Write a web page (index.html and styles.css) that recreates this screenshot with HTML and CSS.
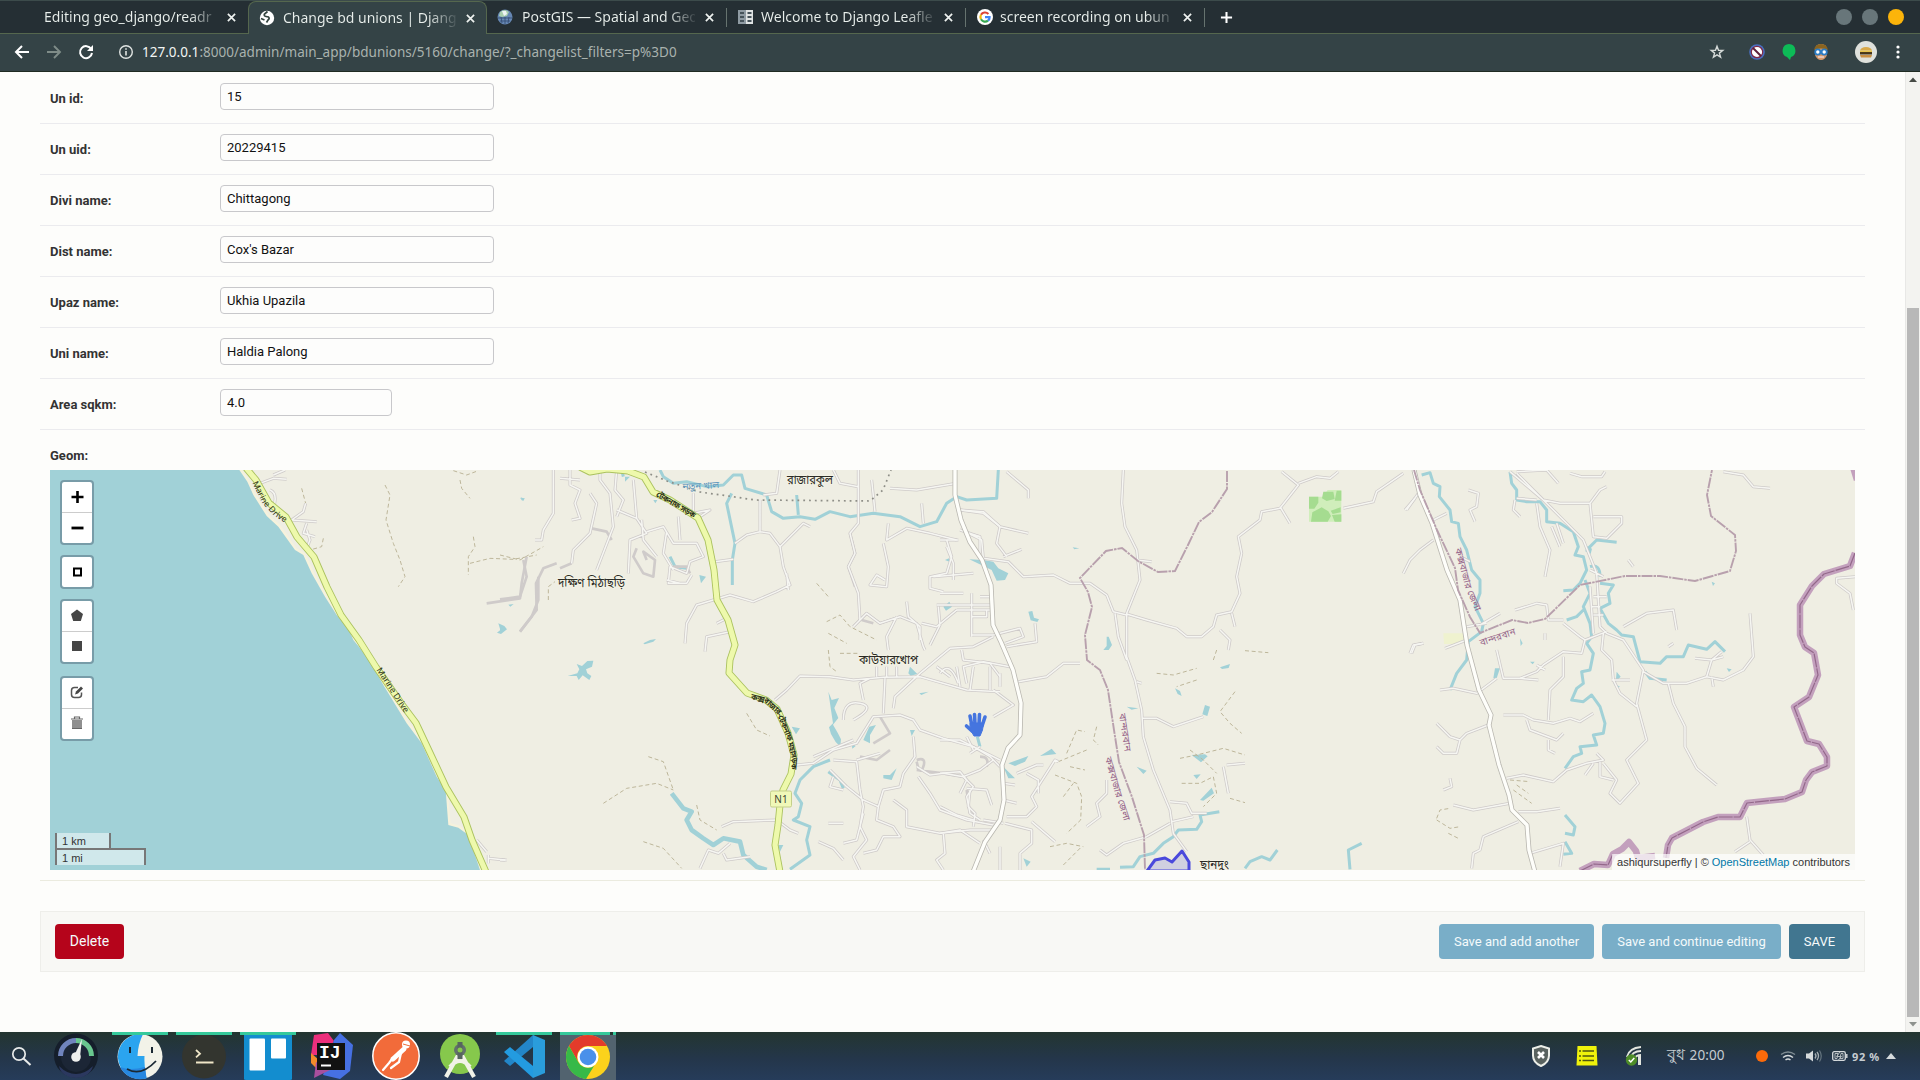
FILE: index.html
```html
<!DOCTYPE html>
<html lang="en">
<head>
<meta charset="utf-8">
<title>Change bd unions | Django site admin</title>
<link rel="stylesheet" href="styles.css">
</head>
<body>
<div class="desktop">
  <header class="tabstrip">
    <div class="tab first"><span class="tab-title">Editing geo_django/readr</span><svg class="close" viewBox="0 0 10 10"><path d="M1 1L9 9M9 1L1 9"/></svg></div>
    <div class="tab active">
      <svg class="favicon" viewBox="0 0 16 16"><circle cx="8" cy="8" r="7.200" fill="#fff"/><path d="M8.500 1.500L5.500 4q-1 2 1.500 2.500l2.500.5q1.500 1.500-.5 3l-1.500 2.500M2 8.500l3.500 1.500" fill="none" stroke="#33443f" stroke-width="1.700"/></svg>
      <span class="tab-title">Change bd unions | Djang</span><svg class="close" viewBox="0 0 10 10"><path d="M1 1L9 9M9 1L1 9"/></svg></div>
    <div class="tab third">
      <svg class="favicon" viewBox="0 0 16 16"><circle cx="8" cy="8" r="7.500" fill="#6687b4"/><path d="M3 3q5-4 9 0l-2 4-5 1-3-1z" fill="#a9cfae"/><path d="M5 2l4 0 1 3-3 2z" fill="#eef4f4"/><path d="M1 9h14M3 12h10M8 8v7M4 8l1 6M12 8l-1 6" stroke="#31496f" stroke-width=".8"/></svg>
      <span class="tab-title">PostGIS — Spatial and Geo</span><svg class="close" viewBox="0 0 10 10"><path d="M1 1L9 9M9 1L1 9"/></svg></div>
    <div class="tab sep">
      <svg class="favicon" viewBox="0 0 16 16"><path fill="#8f9ba3" d="M0 1h8v14H0z"/><path fill="#dfe3e3" d="M8 1h7v14H8z"/><path d="M2 3h4v2H2zM2 7h4v2H2zM2 11h4v2H2zM9.500 3h4v2h-4zM9.500 7h4v2h-4zM9.500 11h4v2h-4z" fill="#46535a"/></svg>
      <span class="tab-title">Welcome to Django Leafle</span><svg class="close" viewBox="0 0 10 10"><path d="M1 1L9 9M9 1L1 9"/></svg></div>
    <div class="tab sep">
      <svg class="favicon" viewBox="0 0 16 16"><circle cx="8" cy="8" r="8" fill="#fff"/><g fill="none" stroke-width="2.200"><path d="M11.400 4.900A4.700 4.700 0 0 0 4 5.800" stroke="#dd4436"/><path d="M4 5.800a4.700 4.700 0 0 0 0 4.500" stroke="#f3b90c"/><path d="M4 10.300a4.700 4.700 0 0 0 7 1.300" stroke="#36a852"/><path d="M11 11.600q1.700-1.500 1.600-3.400H8" stroke="#4285f4"/></g></svg>
      <span class="tab-title">screen recording on ubun</span><svg class="close" viewBox="0 0 10 10"><path d="M1 1L9 9M9 1L1 9"/></svg></div>
    <div class="newtab"><svg viewBox="0 0 14 14"><path d="M7 1v12M1 7h12"/></svg></div>
    <div class="window-buttons"><i></i><i></i><i class="closewin"></i></div>
  </header>
  <nav class="toolbar">
    <div class="nav-icons">
      <svg width="16" height="16" viewBox="0 0 16 16"><path d="M15 8H2M8 2L2 8l6 6" fill="none" stroke="#fff" stroke-width="2"/></svg>
      <svg width="16" height="16" viewBox="0 0 16 16"><path d="M1 8h13M8 2l6 6-6 6" fill="none" stroke="#7f8c88" stroke-width="1.900"/></svg>
      <svg width="16" height="16" viewBox="0 0 16 16"><path d="M13.200 5A6 6 0 1 0 14 9" fill="none" stroke="#fff" stroke-width="2"/><path d="M15 1v6H9z" fill="#fff"/></svg>
    </div>
    <svg class="info" viewBox="0 0 16 16"><circle cx="8" cy="8" r="6.300" fill="none" stroke="#e0e4e2" stroke-width="1.400"/><path d="M8 7v4.500M8 4.300v1.500" stroke="#e0e4e2" stroke-width="1.600"/></svg>
    <div class="url"><b>127.0.0.1</b>:8000/admin/main_app/bdunions/5160/change/?_changelist_filters=p%3D0</div>
    <div class="tools">
      <svg class="star" width="16" height="16" viewBox="0 0 16 16"><path d="M8 2.200l1.500 4 4.300.2-3.400 2.700 1.200 4.100L8 10.900l-3.600 2.300 1.200-4.100-3.400-2.700 4.300-.2z" fill="none" stroke="#d5dad8" stroke-width="1.400"/></svg>
      <svg class="noscript" width="16" height="16" viewBox="0 0 16 16"><circle cx="8" cy="8" r="7.800" fill="#496fc0"/><circle cx="8" cy="8" r="5.700" fill="#fff" stroke="#7e2a48" stroke-width="1.200"/><path d="M4 4l8 8" stroke="#5c1f3a" stroke-width="2"/></svg>
      <svg class="balloon" width="16" height="16" viewBox="0 0 16 16"><path d="M8 0a6.700 6.700 0 0 1 2 13l-1 3-3-3A6.700 6.700 0 0 1 8 0z" fill="#0dbb57"/></svg>
      <svg class="face" width="16" height="16" viewBox="0 0 16 16"><path d="M2 6q0-6 6-6t6 6v5q-2 5-6 5t-6-5z" fill="#d69a6b"/><path d="M1 6q1-6 7-6t7 6q-7-3-14 0z" fill="#8a6420"/><circle cx="4.800" cy="8" r="2.600" fill="#fff" stroke="#2c7cc4" stroke-width="1.800"/><circle cx="11.200" cy="8" r="2.600" fill="#fff" stroke="#2c7cc4" stroke-width="1.800"/><path d="M5 13h6" stroke="#e8c3b0" stroke-width="2"/></svg>
      <svg class="avatar" width="22" height="22" viewBox="0 0 22 22"><circle cx="11" cy="11" r="11" fill="#dfe1dc"/><path d="M5 9.500q1-3.500 6-3.500t6 3.500z" fill="#d8a848"/><path d="M5 11h12v2.500H5z" fill="#463519"/><path d="M5 10.300h12" stroke="#e6c34b" stroke-width="1.500"/><path d="M5 14h12l-1 2.500H6z" fill="#c98f42"/></svg>
      <svg class="kebab" width="6" height="16" viewBox="0 0 6 16"><g fill="#fff"><circle cx="3" cy="3" r="1.600"/><circle cx="3" cy="8" r="1.600"/><circle cx="3" cy="13" r="1.600"/></g></svg>
    </div>
  </nav>

  <div class="viewport">
    <main class="page">
      <div class="row"><label>Un id:</label><div class="field">15</div></div>
      <div class="row"><label>Un uid:</label><div class="field">20229415</div></div>
      <div class="row"><label>Divi name:</label><div class="field">Chittagong</div></div>
      <div class="row"><label>Dist name:</label><div class="field">Cox's Bazar</div></div>
      <div class="row"><label>Upaz name:</label><div class="field">Ukhia Upazila</div></div>
      <div class="row"><label>Uni name:</label><div class="field">Haldia Palong</div></div>
      <div class="row"><label>Area sqkm:</label><div class="field short">4.0</div></div>
      <div class="geom">
        <label>Geom:</label>
        <div class="map">
          <svg class="tiles" viewBox="50 470 1805 400">
            <defs>
              <g id="minor">
                <g transform="translate(40 440) scale(.33333)">
                  <path d="M660 130L700 115 740 118M700 105L735 90M690 150Q715 160 700 205M797 190L790 215 755 240 830 245M800 250L790 280 825 290M800 270L810 300 800 325M1345 1255L1395 1260M1310 1200L1340 1235M1345 1245V1270"/>
                </g>
                <g transform="translate(500 460) scale(.33333)">
                  <path d="M160 30V160L130 210 125 240 105 240M210 30V75L240 90 225 130 240 175 215 180M270 100L290 130 270 220 220 270 215 310M300 30V60L330 100 340 200 290 330M350 150L410 175 440 220 390 240 385 340M440 215L490 200 520 250 590 250 610 290 570 305 560 340 510 320 505 370 560 370 575 345M500 360L540 370M645 305L700 298M780 120V215L740 225 705 250M780 215L810 220 840 260 910 190 930 200M840 260L850 320 870 375 830 395 760 425 690 405 590 435 560 490 555 550M690 470L650 490M690 515L620 530 615 575M860 340L865 390M535 170L540 240M580 100V160L630 150 600 170M240 60L180 55M350 30L345 90 370 120 350 170M400 60L410 175M425 180L430 240 470 290M500 215L490 280 520 330"/>
                  <path d="M1075 30V190L1050 220 1065 280 1045 320 1075 400 1080 480M1115 60L1125 155M1165 190L1160 240 1220 205 1290 220 1370 240M1270 190L1265 130M1150 250L1165 320 1160 380 1110 375 1130 345 1155 360M1340 240L1355 290 1340 340 1290 350 1290 385 1330 395M1170 85L1250 90 1370 70M1380 150L1450 160 1500 200M1400 220L1440 230 1440 280M840 30L830 100 790 105M1000 30L1020 70 1075 80M1300 350L1420 340"/>
                  <path d="M1060 500L1100 460 1140 490 1200 470 1250 490 1270 560 1275 570M1190 470L1160 530 1165 570M1220 425L1225 470 1260 500 1260 540M1310 435H1475M1370 450H1475M1415 400V530M1415 525H1480M1415 470H1460V450M1315 440L1320 495 1290 555M1265 490L1310 500 1370 450M1480 530L1420 560 1350 565 1260 640 1185 710 1180 745M825 720L860 690 900 648 990 650 1060 660 1150 652 1260 650 1400 690 1500 695M1155 655L1150 760M1110 655L1080 670 1090 720M1030 780Q1030 720 1080 730T1060 780M1385 570L1390 600 1470 610 1500 650M1310 620L1350 650M1410 690L1420 620M1470 690L1470 620M1130 620V650M1160 620V650M1190 620V650M1320 640Q1350 600 1375 670"/>
                  <path d="M890 915L940 910 1000 870 1070 850 1120 770 1200 765 1240 780 1260 810 1330 835 1420 860 1500 900M1000 900L1070 905 1080 990 1090 1040 1080 1100 1100 1140 1060 1190 1080 1230M1240 830L1245 890 1210 940 1200 980 1150 990 1135 1040 1090 1020 1040 980 990 930M1135 1040L1130 1080 1180 1100 1200 1130 1150 1130 1130 1170 1090 1180M1180 1020L1220 1050 1220 1100 1320 1120 1410 1110 1480 1110M1255 950L1290 1000 1320 1050 1400 1080 1480 1095M1250 920L1290 945 1330 940 1390 950 1440 930 1480 900M1390 950L1420 980 1400 1010 1410 1060 1440 1080M955 1145L1000 1165 1030 1200M1030 1090L985 1090M1330 1120L1335 1180 1310 1200 1330 1230M600 1225L625 1170 655 1180 690 1150M670 1180L680 1200 750 1190M665 1100L700 1085 830 1080 870 1110 895 1120M0 1200H20M1000 950L990 980 1030 990M940 890L1060 840M1070 900L1140 880M1090 1060L1070 1140 1030 1150M1400 830L1420 870"/>
                </g>
                <g transform="translate(940 460) scale(.33333)">
                  <path d="M550 30L545 130 555 200 590 270 600 360 560 460 560 590 585 660 605 750 610 830 640 930 690 1050 700 1120 740 1175M200 35L265 90V115M60 150L130 155 180 200 265 220M75 215L125 240 130 295 205 305 250 350 340 345 390 370 450 370 500 405 520 455 560 465M180 200L170 250 200 290M190 290L245 268M590 300L635 305M525 460L535 530 560 600M560 462L620 480 710 505 740 530 785 530 820 500 830 465 875 455 900 400 890 350 905 280 895 230 960 180 965 155 1020 145 1075 75 1025 35M1075 70L1130 50 1170 55 1195 35M1020 140L1050 190M1210 145L1300 125 1310 95 1390 40M875 460L885 500M840 510L870 540 865 570M1480 240L1440 270 1410 300 1390 340M1435 100L1400 150M160 525L240 505 250 530 195 550M200 560L290 545 285 490M235 665L320 650 370 610 420 610M590 665L605 670M605 775L650 775 700 800 790 770M1410 580L1420 555 1450 550M0 840L60 840 100 860 150 890 180 920M0 940L60 935 80 960 60 1000M80 985L140 990 155 1035M90 990L85 1040 105 1060 100 1100M0 1040L50 1065 100 1080M190 1090L130 1080M0 1120L60 1110 120 1150M190 970L225 975M190 1020L230 1030M200 1070L260 1070 290 1040 275 1010 345 900 355 905M260 940L295 960 295 1000M195 1090L275 1110 275 1150 240 1180 240 1230M275 1085L345 1145M180 1160L180 1230M130 1140L150 1180M440 1100L480 1070 470 1030 500 1000 500 960M480 1170L500 1185 550 1150 620 1130 690 1090M695 1085L760 1070M690 1025L740 1030 755 1060 800 1060M850 920L865 1000M860 915L915 910M160 690L220 735 160 770M80 670L70 620 130 605 210 620M120 230L60 210M120 410H155M50 620L60 680M180 640L180 680M120 860L90 880M0 240H55M20 260L40 310 40 360M230 940L290 915 310 915M0 400L70 400"/>
                </g>
                <g transform="translate(1400 460) scale(.33333)">
                  <path d="M330 35L430 120 480 130 570 130 600 90 620 80M350 40L420 110 550 240 590 340 600 500 620 520 670 540 730 630 720 680 710 730 740 840 680 900 715 970 660 1030 630 1000 650 960 610 910M570 130L580 230 620 235 665 190V170H580M350 35L440 30 475 70M510 40L545 50 605 50 615 35M410 130L420 200 450 270 435 350M345 120L340 150 360 170M350 115L410 120M970 35L1030 45 1060 80 1110 85M205 90L235 100 230 140 210 150 225 185M180 290L210 305M135 565L200 540M35 580L45 555 70 550M240 495L300 460M345 450L410 430 440 435 445 480 490 480M490 490L540 530 555 540 620 515M555 540L545 580 490 575 430 615 410 635 360 655 310 655 290 570M435 630L410 615M360 655L415 660M490 590L490 650 450 690 445 780M310 765H370L400 780 460 790 510 775 540 785 580 760M380 780L390 810 470 840 490 820M445 840V870L465 880M610 520L605 570 635 600 640 660 660 700 710 740M635 660L690 660M670 500L740 460 820 450 830 510M805 560L820 550M730 635L790 670 860 670 920 650 970 660 1030 630 1060 590 1050 460M920 650L935 600 970 590M935 650L940 680M805 670L820 730 855 800 855 860 890 925 950 975M885 595L935 600 965 575M120 690L160 685 230 700 290 655M110 790L150 830 180 840 200 820 265 795M110 860L130 880 170 880 180 840M320 955L370 945 460 965 500 930 560 910 610 900 590 880M600 900L600 950 640 960M555 945L580 910M150 955L155 980 130 990M160 1035L220 1050 330 1030M355 1055L410 1055 480 1045M355 1085L250 1130 240 1170 220 1180 215 1225M390 1180L490 1150 480 1220M390 1180L400 1225M1040 1070L1050 1140 1090 1185M1050 1145L1005 1175M1365 350L1310 355 1310 370 1350 400 1360 450M685 300L700 320M435 520V540M455 200L480 260M470 190L490 250M570 380L580 520M580 410H620M575 440H600M580 465H610M570 330L610 350M100 180L140 160M200 500L260 490M15 150L45 115"/>
                </g>
              </g>
              <g id="major">
                <path d="M955 470L955 495 961 520 970 542 982 560 991 585 993 625 1001 642 1013 670 1021 703 1020 735 1008 748 1002 765 1004 800 1000 820 985 842 973 872"/>
                <path d="M1414 470L1420 495 1432 523 1447 570 1460 600 1467 645 1479 690 1491 715 1489 725 1499 765 1509 795 1512 810 1527 825 1529 850 1535 872"/>
              </g>
              <g id="trunk">
                <path d="M246 468L256 480 269 503 286 517 297 537 314 557 327 587 341 615 359 640 376 667 401 703 416 723 432 757 446 787 464 817 472 840 486 872"/>
                <path d="M580 467L590 472 607 469 628 471 644 477 653 492 670 500 698 518 708 540 714 570 717 600 728 620 735 645 730 660 729 673 747 693 766 700 777 709 788 733 794 755 791 774 783 790 780 805 778 825 775 845 780 872"/>
              </g>
              <path id="marine1" d="M254 482L264 502 275 514 292 525"/>
              <path id="marine2" d="M378 669L405 710 422 735"/>
              <path id="teknaf" d="M656 494L670 502 691 514 707 526"/>
              <path id="coxroad" d="M751 697L766 701 778 712 789 738 794 760 791 790"/>
              <path id="kolhal" d="M683 490L705 489 732 487"/>
              <path id="bandar1" d="M1119 714L1126 760"/>
              <path id="cox1" d="M1105 758L1114 790 1127 830"/>
              <path id="cox2" d="M1455 549L1466 590 1477 615"/>
              <path id="bandar2" d="M1481 646L1520 633"/>
            </defs>

            <rect class="land" x="50" y="470" width="1805" height="400"/>
            <g transform="translate(40 440) scale(.33333)">
              <path class="beach" d="M598 90L622 125 640 165 680 228 715 260 765 330 790 345 815 400 855 470 890 525 925 565 940 600 985 655 1030 735 1100 850 1145 910 1190 1010 1217 1050 1225 1155 1255 1163 1285 1185 1320 1290"/>
              <path class="sea" d="M30 90H598L622 125 640 165 680 228 715 260 765 330 790 345 815 400 855 470 890 525 925 565 940 600 985 655 1030 735 1100 850 1145 910 1190 1010 1217 1050 1225 1155 1255 1163 1285 1185 1320 1290H30z"/>
              <path class="water" d="M1375 550l18 8 8 10-18 14-12-4 10-8zM1442 172l12 4-8 6zM1405 494l16-2-10 8z"/>
            </g>
            <g transform="translate(500 460) scale(.33333)">
              <path class="water" d="M203 648L232 640 238 628 230 612 246 618 262 603 280 602 276 620 258 628 262 640 274 648 268 660 248 646 236 660 230 648zM430 550l20-10 18-3-8 8-26 8zM985 695l10 25 22-6-14 30 12 30-16 20 14 24 10 20-2 22-14-14-14-24-6-20 12-12-6-40zM1090 840l18-40 20-5-18 30 0 25zM1225 640l5-20 22 22-20 5zM1330 440l18-15 8 15-18 12zM1335 300l12-5 5 12zM875 800l25 5-12 18zM1230 810l15 0-10 18zM1150 945l20 0 20-20-15 35-25-5zM60 115l14 0-4 8zM375 50l15 0-15 15zM460 120l12 0-6 10zM1258 700l28-5-22 10zM0 500l15 10-15 10zM598 345l20 5-15 20zM1055 850l12 8-10 8zM835 1155l15 0-10 20z"/>
              <path class="river" d="M480 30L490 50 520 70 560 65 620 80 670 75 700 45 725 45 735 85 800 105 815 155 850 175 900 170 945 178 990 155 1050 170 1120 160 1200 170 1260 200 1310 185 1340 130 1370 110 1400 120 1490 115 1495 30M890 105L895 165M695 100L680 130 705 250 697 300 697 375M510 290L525 320 560 325M370 50L365 30"/>
              <path class="river thick" d="M515 1000L550 1045 575 1055 560 1080 575 1110 610 1135 640 1155 670 1135 720 1145 730 1185 770 1220 800 1230"/>
              <path class="river" d="M990 900L940 920 900 960 885 1000 905 1030 895 1070 880 1080 930 1100 920 1140 930 1185 870 1228M985 935L1020 960 1030 985"/>
            </g>
            <g transform="translate(940 460) scale(.33333)">
              <path class="water" d="M88 298L130 300 160 305 175 325 205 340 195 360 170 362 155 330zM265 455l12-2 5 20 15 5-5 8-20-5zM500 530l6 0 10 25-10 15-16 0 10-12zM840 622l30-10-4 12-20 3zM705 685l15 8 5 15-12-6zM795 735l15 5-8 28-15-5zM780 1020L815 983 822 1000 790 1022zM590 920l30 12-10 10zM755 885l40-2 8 6-20 18zM300 888l35-22 14 16zM205 910L265 888 255 905 225 918zM190 920l35 35-20 0zM760 945l22-2-12 14zM250 1195l22 10-12 15zM398 262l20 3-15 3zM560 740l35 5-20 4z"/>
              <path class="river" d="M540 1222L580 1220 600 1190 640 1180 670 1150 700 1130 715 1110 770 1108 785 1085 780 1065 838 1055M470 1228H510M915 1225L930 1205 965 1190 990 1200 1012 1170M1230 1228L1225 1170 1265 1150M112 830L120 860"/>
            </g>
            <g transform="translate(1400 460) scale(.33333)">
              <path class="river" d="M65 45L90 38 100 70 120 80 118 110 150 150 155 185 175 190 180 230 200 270 215 330 240 360 240 400 225 440 250 490 245 515 205 545 200 600 170 640 150 690M330 35L335 70 350 90 350 120 380 125 420 125 440 150 440 185 480 190 520 215 535 260 525 285 550 290 560 330 540 370 520 390 490 392M650 247L590 240 565 265M570 320Q600 310 600 350M555 360L570 400 550 440 570 490 575 530 560 550 580 580 570 630 545 635 550 670 530 685 515 720 550 725 575 705 600 740 615 790 610 820 580 825 590 855 540 860 545 880 520 890 495 925M600 370L640 375 625 400 630 430 600 445 625 490 650 510 665 525 700 530 720 605 780 610 800 590 850 590 865 555 920 568 945 545 975 575M735 635L750 655 800 660M495 1065L525 1100 520 1125 495 1120M495 1145L515 1180 490 1183M550 450L530 470 500 480"/>
              <path class="water" d="M285 625l15 0-10 30-10 0zM390 605l14 0-6 8zM360 535l8 15-6 8zM650 635l12 15-15 15zM640 670l20 10-10 5zM980 625l15 3-8 8zM935 365l10 5-6 8zM560 258l16 8-4 16-16-8z"/>
              <path fill="#eff2cf" d="M130 520h60l12 20-30 12h-40z"/>
            </g>
            <g transform="translate(940 460) scale(.33333)">
              <path fill="#d0eebb" d="M1107 110h42l14-20h41v95h-97z"/>
              <path fill="#a5dc90" d="M1107 110l28 0 0 18-12 18-16 0zM1150 95l30 0 4 22-24 6-14-8zM1190 92l14 0 0 30-20 0zM1113 185l4-28 28-15 20 12 8 14-10 17zM1172 152l30-10 0 15-24 5zM1176 165l28-2 0 22-20 0z"/>
            </g>

            <g class="tracks">
              <g transform="translate(40 440) scale(.33333)"><path d="M1035 135L1050 165 1038 240 1060 310 1080 360 1095 410 1075 440M1300 290L1305 320 1285 350V405M1290 370L1350 355 1420 358 1490 345M1240 92L1280 105 1315 92M1260 120L1265 145 1290 175M785 145L797 190M850 295L845 320 810 330"/></g>
              <g transform="translate(500 460) scale(.33333)"><path d="M0 285L60 300 130 260M145 420V380L165 365M310 1030L380 985 470 970 520 990M445 890L490 905 520 990M590 1035L600 1080 650 1110M740 760L770 810 810 828M430 1145L490 1165 545 1225M980 485L1020 465 1050 500 1130 540M985 520L1040 550M985 570L990 620 1010 635M1020 580L1080 580M950 370L985 410"/></g>
              <g transform="translate(940 460) scale(.33333)"><path d="M650 640L700 645 770 625M820 600L830 570M915 572L985 578M885 695L840 755 870 790 905 820M770 660L710 680M380 880L410 810 435 815M470 800L460 840 475 855M355 905L440 870M345 945L410 970 425 1010 422 1080 380 1120M370 1010L400 970M330 1160L380 1150 430 1160M370 1215L425 1160M720 895L770 885 850 865 915 885M725 970L780 970 820 950 830 1000 790 1040M870 1015L915 1028M750 870L790 900 830 940M390 920L435 930"/></g>
              <g transform="translate(1400 460) scale(.33333)"><path d="M330 960L390 965M340 990L395 1030M350 975L385 1000M110 1075L120 1050 150 1045M110 1080L150 1105 180 1100M145 1120L175 1135"/></g>
            </g>
            <g class="paths">
              <g transform="translate(40 440) scale(.33333)"><path d="M1340 490L1440 475 1445 430 1460 350M1440 575L1475 530 1495 480V410"/></g>
              <g transform="translate(500 460) scale(.33333)"><path d="M0 418L60 410 80 350 70 300M60 515L110 450 108 370 130 325 170 310M215 310L180 325M275 205L320 215 335 240M410 265L400 290 430 340 460 350 465 300 430 275 440 300M520 320H560L570 340M1085 480L1120 490M1080 890L1130 900 1170 870M1140 770L1170 820 1120 850M1250 900Q1280 890 1270 920T1250 905M1440 890Q1470 890 1460 920M1050 220L1065 280 1045 320 1065 380M1060 500L1100 460 1140 490 1200 470M1400 990L1410 1060M1250 930L1330 940 1390 950M1310 620L1350 650"/></g>
            </g>
            <use href="#minor" class="minor-edge"/><use href="#minor" class="minor-core"/>
            <use href="#major" class="major-edge"/><use href="#major" class="major-core"/>
            <use href="#trunk" class="trunk-edge"/><use href="#trunk" class="trunk-core"/>
            <path class="railway" d="M645 472L667 481 700 492 735 497 755 500 870 501 883 490 891 470"/>

            <g class="state">
              <path d="M1227 471V489L1212 512 1199 522 1188 545 1175 571 1158 572 1138 561 1122 548 1106 551 1080 578 1088 592 1092 607 1085 635 1087 660 1100 670 1108 690 1114 730 1119 762 1132 797 1144 835 1145 870"/>
              <path d="M1414 470L1420 490 1437 530 1455 568 1458 590 1470 617 1480 633 1512 620 1528 623 1545 619 1580 585 1625 576 1660 576 1695 581 1730 571 1736 551 1735 535 1711 516 1707 495 1712 470"/>
            </g>
            <g class="country">
              <path d="M1855 553L1850 566 1824 574 1812 586 1800 605V635L1805 647 1814 653 1818 675 1809 697 1794 707 1807 741 1819 744 1827 757 1827 766 1812 772 1806 780 1802 792 1785 799 1747 803 1740 817 1718 817 1703 822 1672 838 1668 845 1666 858M1580 871L1594 864 1608 865 1613 854 1622 849 1629 842 1636 851 1638 858 1655 856M1853 467L1857 480"/>
              <path class="dash" d="M1855 553L1850 566 1824 574 1812 586 1800 605V635L1805 647 1814 653 1818 675 1809 697 1794 707 1807 741 1819 744 1827 757 1827 766 1812 772 1806 780 1802 792 1785 799 1747 803 1740 817 1718 817 1703 822 1672 838 1668 845 1666 858M1580 871L1594 864 1608 865 1613 854"/>
            </g>
            <path class="union" d="M1147 871L1155 860 1165 858 1172 862 1182 851 1189 862V871z"/>

            <g class="road-label">
              <text><textPath href="#marine1">Marine Drive</textPath></text>
              <text><textPath href="#marine2">Marine Drive</textPath></text>
              <text class="bn-road"><textPath href="#teknaf" textLength="44">টেকনাফ সড়ক</textPath></text>
              <text class="bn-road"><textPath href="#coxroad" textLength="92">কক্সবাজার-টেকনাফ মহাসড়ক</textPath></text>
            </g>
            <text class="water-label"><textPath href="#kolhal">নতুন খাল</textPath></text>
            <g class="state-label">
              <text><textPath href="#bandar1" textLength="38">বান্দরবান</textPath></text>
              <text><textPath href="#cox1" textLength="66">কক্সবাজার জেলা</textPath></text>
              <text><textPath href="#cox2" textLength="66">কক্সবাজার জেলা</textPath></text>
              <text><textPath href="#bandar2" textLength="37">বান্দরবান</textPath></text>
            </g>
            <g class="place">
              <text x="787" y="484" textLength="46" lengthAdjust="spacingAndGlyphs">রাজারকুল</text>
              <text x="558" y="587" textLength="67" lengthAdjust="spacingAndGlyphs">দক্ষিণ মিঠাছড়ি</text>
              <text x="859" y="664" textLength="59" lengthAdjust="spacingAndGlyphs">কাউয়ারখোপ</text>
              <text x="1200" y="869" textLength="29" lengthAdjust="spacingAndGlyphs">ছানদুং</text>
            </g>
            <rect x="770.500" y="791" width="21" height="16" rx="1.500" fill="#f0f8b8" stroke="#c4cf8b"/>
            <text class="ref" x="781" y="803">N1</text>
            <g transform="translate(964 711)" fill="none" stroke="#4575df" stroke-linecap="round" stroke-width="3.600"><path d="M8 15L6 5M11 13L10.500 3.500M15 13L15.500 3.500M18 15L21 6M8 20L2.500 15"/><path d="M6.500 12h13l-1 7-2.500 6h-6L6 18z" fill="#4575df" stroke-width="1"/></g>
          </svg>
          <div class="controls">
            <div class="bar"><svg viewBox="0 0 30 30"><path d="M9.500 15h12M15.500 9v12" stroke="#000" stroke-width="2.600"/></svg><svg viewBox="0 0 30 30"><path d="M9.500 15h12" stroke="#000" stroke-width="2.800"/></svg></div>
            <div class="bar"><svg viewBox="0 0 30 30"><path d="M12 11.500h7v7h-7z" fill="#fff" stroke="#000" stroke-width="2"/></svg></div>
            <div class="bar"><svg viewBox="0 0 30 30"><path d="M15 8.500l6 4.500-2.200 7h-7.600L9 13z" fill="#464646"/></svg><svg viewBox="0 0 30 30"><path d="M10 9h10v10H10z" fill="#464646"/></svg></div>
            <div class="bar last"><svg viewBox="0 0 30 30"><path d="M16 9.500h-3.500q-3 0-3 3v4q0 3 3 3h4q3 0 3-3v-2" fill="none" stroke="#555" stroke-width="1.500"/><path d="M13 16.500l1-3 5-5 2 2-5 5z" fill="#464646"/></svg><svg viewBox="0 0 30 30"><path d="M10 11h10v9H10z" fill="#8f8f8f"/><path d="M9 10h12M12.500 10V8h5v2M10 19.500h10" fill="none" stroke="#666" stroke-width="1.200"/></svg></div>
          </div>
          <div class="scale"><span class="km">1 km</span><span class="mi">1 mi</span></div>
          <div class="attribution">ashiqursuperfly | © <a>OpenStreetMap</a> contributors</div>
        </div>
      </div>
      <div class="submit-row">
        <span class="btn delete">Delete</span>
        <span class="btn another">Save and add another</span>
        <span class="btn continue">Save and continue editing</span>
        <span class="btn save">SAVE</span>
      </div>
    </main>
    <div class="scrollbar">
      <svg viewBox="0 0 10 6"><path d="M5 .5L9 5H1z" fill="#454a45"/></svg>
      <div class="track"><div class="thumb"></div></div>
      <svg viewBox="0 0 10 6"><path d="M5 5.500L9 1H1z" fill="#8d918d"/></svg>
    </div>
  </div>

  <footer class="taskbar">
    <div class="search"><svg width="22" height="22" viewBox="0 0 22 22"><circle cx="9" cy="9" r="6.200" fill="none" stroke="#e8ebea" stroke-width="1.700"/><path d="M13.500 13.500l7 6.500" stroke="#e8ebea" stroke-width="2"/></svg></div>
    <div class="app"><svg viewBox="0 0 56 48"><circle cx="28" cy="23.500" r="22" fill="#151e2b"/><path d="M11 34q2 11 17 12 14-1 17-12-8 8-17 8t-17-8z" fill="#2b385f"/><circle cx="28" cy="25" r="15" fill="#1c2636"/><path d="M12.500 24a15.500 15.500 0 0 1 15.500-15.500" fill="none" stroke="#7084bd" stroke-width="5"/><path d="M28 8.500A15.500 15.500 0 0 1 43.500 24" fill="none" stroke="#69c78f" stroke-width="5"/><path d="M34 7L32 25l-6-1z" fill="#f0f1ee"/><circle cx="28" cy="25" r="4.800" fill="#f0f1ee"/></svg></div>
    <div class="app open"><svg viewBox="0 0 56 48"><circle cx="28" cy="24.500" r="22.500" fill="#f2f2e8"/><path d="M31 2.200Q26 12 25.500 24h7q-.5 12 2 22.200A22.500 22.500 0 1 1 31 2.200z" fill="#2ba4ef"/><path d="M8 35q10 4 25 0l1.500 11.200A22.500 22.500 0 0 1 8 35z" fill="#2787e0"/><path d="M18 15v6M40 15v6" stroke="#1b2833" stroke-width="2"/><path d="M15 37q14 8 29-8" fill="none" stroke="#1b2833" stroke-width="1.800"/></svg></div>
    <div class="app open"><svg viewBox="0 0 56 48"><circle cx="28" cy="24.500" r="22" fill="#33352f"/><path d="M20 18l4 3.700-4 3.700" fill="none" stroke="#f0e7c8" stroke-width="1.800"/><path d="M20 30.500h17.500" stroke="#f0e7c8" stroke-width="2"/></svg></div>
    <div class="app open"><svg viewBox="0 0 56 48"><path d="M4 3h48v44q0 1-2 1H6q-2 0-2-1z" fill="#138dcf"/><rect x="9.500" y="6.500" width="15.500" height="32" rx="1" fill="#fff"/><rect x="31" y="6.500" width="15" height="20" rx="1" fill="#fff"/></svg></div>
    <div class="app"><svg viewBox="0 0 56 48"><path d="M10 3l14-2 6 8-8 14H7z" fill="#ec2f7c"/><path d="M30 8l6-7 13 12-3 26-10 8-17-4z" fill="#4670e2"/><path d="M7 21l9 8-3 8-6-6z" fill="#f28c2a"/><path d="M12 30l14 8-16 8z" fill="#a84f9e"/><path d="M13 11h28v27H13z" fill="#121212"/><path d="M17 33.500h10" stroke="#fff" stroke-width="2"/><text x="15" y="26" fill="#fff" class="ij">IJ</text></svg></div>
    <div class="app"><svg viewBox="0 0 56 48"><circle cx="28" cy="24" r="23.200" fill="#f26b3a" stroke="#fff" stroke-width="1.500"/><g fill="none" stroke="#fff" stroke-linecap="round"><path d="M36 17l-11 10" stroke-width="5"/><path d="M24 27l-3 4-6 7M33 21l-2 9-8 6" stroke-width="2.200"/></g><circle cx="38" cy="12.500" r="4" fill="#fff"/><path d="M35 12l7 2" stroke="#ee6b39"/></svg></div>
    <div class="app"><svg viewBox="0 0 56 48"><circle cx="28" cy="22" r="20" fill="#86c84c"/><path d="M28 20L14 45M28 20l14 25M18 35q10-12 20 0" fill="none" stroke="#f1f2e8" stroke-width="4.200"/><circle cx="28" cy="18" r="6" fill="#62706b"/><path d="M28 10v17" stroke="#56645f" stroke-width="5"/><circle cx="28" cy="18" r="2.500" fill="#86c84c"/></svg></div>
    <div class="app open"><svg viewBox="0 0 56 48"><path d="M37 3l12 5v33l-12 5z" fill="#2a9ddb"/><path d="M37 3v12L14 34l-6-5z" fill="#2386c8"/><path d="M37 46V34L14 15l-6 5z" fill="#239be0"/></svg></div>
    <div class="app open current"><svg viewBox="0 0 56 48"><circle cx="28" cy="25" r="22" fill="#fbd21c"/><path d="M9 14A22 22 0 0 1 47 14H28A11 11 0 0 0 18.500 30.500z" fill="#e33b2b"/><path d="M9 14l9.500 16.500A11 11 0 0 0 34 34L26 47A22 22 0 0 1 9 14z" fill="#37b948"/><circle cx="28" cy="25" r="10.500" fill="#fff"/><circle cx="28" cy="25" r="8.300" fill="#4a90ea"/></svg><i></i></div>
    <div class="tray">
      <svg class="t-shield" width="20" height="22" viewBox="0 0 20 22"><path d="M10 1l8 2.500v7q0 7-8 10.500-8-3.500-8-10.500v-7z" fill="#59625f" stroke="#eceee8" stroke-width="2"/><path d="M7 7l6 6M13 7l-6 6" stroke="#fff" stroke-width="2.600"/></svg>
      <svg class="t-note" width="22" height="22" viewBox="0 0 22 22"><path d="M1.500 1h19L21.500 20.500h-21z" fill="#f0f20b"/><path d="M3 6h2M6.500 6H18M3 11h2M6.500 11H18M3 15.500h2M6.500 15.500H18" stroke="#4f5511" stroke-width="1.300"/></svg>
      <svg class="t-sync" width="18" height="22" viewBox="0 0 18 22"><path d="M2 12Q4 3 16 2M5 14q2-8 11-8M9 14q2-4 7-4" fill="none" stroke="#e3e6df" stroke-width="2"/><path d="M14.500 11v9" stroke="#e3e6df" stroke-width="3"/><circle cx="6.500" cy="15" r="5.700" fill="#4d8c27"/><path d="M3.800 15l2 2 3.500-4" fill="none" stroke="#fff" stroke-width="1.500"/></svg>
      <span class="clock"><span class="day">বুধ</span> 20:00</span>
      <i class="rec"></i>
      <svg class="t-wifi" width="16" height="14" viewBox="0 0 16 14"><path d="M1 5.500q7-5 14 0" fill="none" stroke="#7e8b92" stroke-width="1.400"/><path d="M3 8.500q5-4 10 0M5.500 11q2.500-2 5 0" fill="none" stroke="#d5dadc" stroke-width="1.500"/></svg>
      <svg class="t-vol" width="18" height="14" viewBox="0 0 18 14"><path d="M1 4.500h3L8 1.500v11L4 9.500H1z" fill="#d5dadc"/><path d="M10 4.500q2 2.500 0 5M12 3q3 4 0 8" fill="none" stroke="#a5aeb2" stroke-width="1.300"/><path d="M14.500 1.500q3.500 5.500 0 11" fill="none" stroke="#65757f" stroke-width="1.200"/></svg>
      <svg class="t-bat" width="16" height="12" viewBox="0 0 16 12"><rect x=".7" y="1.700" width="12.600" height="8.600" rx="1.500" fill="none" stroke="#d5dadc" stroke-width="1.300"/><path d="M14.800 4v4" stroke="#d5dadc" stroke-width="1.400"/><path d="M3 3.500h3l-1 5H3zM11 3.500v5H8l1-5zM8 2L4.500 6.500h5L6 10.500" fill="none" stroke="#b3babd"/></svg>
      <span class="pct">92 %</span>
      <svg class="t-up" width="10" height="6" viewBox="0 0 10 6"><path d="M5 0l5 6H0z" fill="#d5dadc"/></svg>
    </div>
  </footer>
</div>
</body>
</html>
```
FILE: styles.css
```css
* { box-sizing: border-box; }
body { margin: 0; background: #fdfdfb; font-family: Roboto, "Liberation Sans", sans-serif; }
.desktop { width: 1920px; height: 1080px; display: flex; flex-direction: column; overflow: hidden; }

/* tab strip */
.tabstrip { height: 34px; flex: none; display: flex; background: #252f34; border-top: 1px solid #3c4b4b; border-bottom: 1px solid #55674e; font-family: "Noto Sans", "Open Sans", sans-serif; }
.tab { width: 239px; flex: none; display: flex; align-items: center; padding-left: 20px; height: 32px; position: relative; color: #e9efec; }
.tab.first { width: 248px; padding-left: 44px; }
.tab.active { background: #344346; height: 33px; border: 1px solid #55674e; border-bottom: 0; border-radius: 8px 8px 0 0; padding-left: 10px; margin-right: -1px; }
.tab.third { padding-left: 11px; width: 240px; }
.tab.sep::before { content: ""; position: absolute; left: 0; top: 7px; width: 1px; height: 19px; background: #66736f; }
.tab.sep { padding-left: 12px; }
.favicon { width: 16px; height: 16px; margin-right: 9px; flex: none; }
.tab.active .favicon { margin-right: 8px; }
.tab.sep .favicon { margin-right: 7px; }
.tab-title { width: 173px; flex: none; white-space: nowrap; font-size: 14px; line-height: 20px; margin-right: 10px; color: transparent; background: linear-gradient(90deg, #e9efec 84%, rgba(233, 239, 236, .1)); -webkit-background-clip: text; background-clip: text; }
.close { width: 9px; height: 9px; flex: none; fill: none; stroke: #eef2f0; stroke-width: 1.9; }
.newtab { position: relative; display: flex; align-items: center; padding-left: 16px; }
.newtab::before { content: ""; position: absolute; left: 0; top: 7px; width: 1px; height: 19px; background: #66736f; }
.newtab svg { width: 13px; height: 13px; fill: none; stroke: #fff; stroke-width: 2.2; }
.window-buttons { margin-left: auto; display: flex; align-items: center; gap: 10px; padding-right: 16px; }
.window-buttons i { width: 16px; height: 16px; border-radius: 50%; background: #68767a; }
.window-buttons .closewin { background: #fcb40a; }

/* address bar */
.toolbar { height: 38px; flex: none; display: flex; align-items: center; background: #344346; border-bottom: 1px solid #1f2b22; padding: 0 0 2px 14px; font-family: "Noto Sans", "Open Sans", sans-serif; }
.nav-icons { display: flex; gap: 16px; width: 104px; }
.info { width: 16px; height: 16px; margin-right: 8px; }
.url { font-size: 13.500px; color: #a9b2ae; white-space: nowrap; letter-spacing: .02px; }
.url b { font-weight: 400; color: #f2f5f3; }
.tools { margin-left: auto; display: flex; align-items: center; padding-right: 19px; }
.star { margin-right: 24px; }
.noscript, .balloon { margin-right: 16px; }
.face { margin-right: 26px; }
.avatar { margin-right: 18px; }

/* page */
.viewport { height: 960px; flex: none; display: flex; background: #fdfdfb; }
.page { width: 1905px; padding: 0 40px; }
.row { height: 51px; display: flex; border-bottom: 1px solid #ebebee; padding: 10px 10px 0; width: 1825px; }
.row:first-child { height: 52px; padding-top: 11px; }
.row label { width: 170px; padding-top: 8px; }
label { font-size: 13px; font-weight: 700; color: #333; line-height: 15px; display: block; }
.field { width: 274px; height: 27px; border: 1px solid #c8c8cb; border-radius: 4px; padding: 0 6px; font-size: 13px; line-height: 25px; color: #111; background: #fdfdfc; }
.field.short { width: 172px; }
.geom { width: 1825px; height: 451px; padding: 18px 10px 0; border-bottom: 1px solid #ebebdf; }
.geom label { height: 22px; }

.map { position: relative; width: 1805px; height: 400px; overflow: hidden; }
.tiles { display: block; width: 1805px; height: 400px; }
.land { fill: #efeee3; }
.beach { fill: none; stroke: #f6f2dc; stroke-width: 14; }
.sea { fill: #a1d1d7; }
.water { fill: #a1d1d7; }
.river { fill: none; stroke: #a1d1d7; stroke-width: 9; stroke-linejoin: round; }
.river.thick { stroke-width: 14; }
.tracks { fill: none; stroke: #bdb69a; stroke-width: 3; stroke-dasharray: 12 8; }
.paths { fill: none; stroke: #cfcbca; stroke-width: 8; stroke-linejoin: round; }
.minor-edge, .minor-core, .major-edge, .major-core, .trunk-edge, .trunk-core { fill: none; stroke-linejoin: round; }
.minor-edge { stroke: #cecac9; stroke-width: 9; }
.minor-core { stroke: #f6f6f2; stroke-width: 4.500; }
.major-edge { stroke: #b9b7b0; stroke-width: 5; }
.major-core { stroke: #fefefa; stroke-width: 3.400; }
.trunk-edge { stroke: #abc25f; stroke-width: 7; }
.trunk-core { stroke: #eef9ac; stroke-width: 5.200; }
.railway { fill: none; stroke: #8e8e87; stroke-width: 1.700; stroke-dasharray: 1.800 4; }
.state { fill: none; stroke: #b8a0ad; stroke-width: 1.900; stroke-dasharray: 11 1 2.500 1; }
.country { fill: none; stroke: #c3a0bd; stroke-width: 6.500; stroke-linejoin: round; }
.country .dash { stroke: #93688a; stroke-width: 1.200; stroke-dasharray: 14 1; }
.union { fill: #d0d0e0; stroke: #4a49dc; stroke-width: 3; stroke-linejoin: round; }
.tiles text { font-family: "Noto Sans", "Noto Sans Bengali", "Liberation Sans", sans-serif; }
.road-label text { font-size: 8.500px; fill: #2d3318; dominant-baseline: middle; }
.road-label .bn-road { font-size: 8px; font-weight: 700; }
.water-label { font-size: 9.500px; fill: #5d96bd; }
.state-label text { font-size: 9.500px; fill: #946288; }
.place text { font-size: 12px; fill: #2b2b25; stroke: #f4f3e6; stroke-width: 2px; paint-order: stroke; }
.tiles .ref { font-size: 10px; fill: #3b4430; text-anchor: middle; }

.controls { position: absolute; left: 10px; top: 10px; display: flex; flex-direction: column; gap: 10px; }
.bar { width: 34px; border: 2px solid rgba(70, 90, 110, .45); border-radius: 4px; background: #fff; background-clip: padding-box; }
.bar.last { margin-top: 2px; }
.bar svg { display: block; width: 30px; height: 30px; }
.bar svg + svg { border-top: 1px solid #ccc; height: 31px; }
.scale { position: absolute; left: 5px; bottom: 5px; display: flex; flex-direction: column; font: 11px/13px "Liberation Sans", sans-serif; color: #333; }
.scale span { height: 17px; background: rgba(255, 255, 255, .5); border: 2px solid #777; border-top: 0; padding: 2px 5px 0; }
.scale .km { width: 56px; }
.scale .mi { width: 91px; border-top: 2px solid #777; border-bottom: 0; margin-top: -2px; }
.attribution { position: absolute; right: 0; bottom: 0; height: 16px; background: rgba(255, 255, 255, .7); padding: 0 5px; font: 11px/16px "Liberation Sans", sans-serif; color: #333; white-space: nowrap; }
.attribution a { color: #0078a8; }

.submit-row { width: 1825px; height: 61px; margin-top: 30px; padding: 12px 14px; border: 1px solid #eeeeea; background: #f8f8f5; display: flex; gap: 8px; }
.btn { height: 35px; border-radius: 4px; color: #f4fafb; font-size: 13px; line-height: 35px; text-align: center; background: #79aec8; }
.delete { width: 69px; margin-right: auto; background: #b5041b; font-size: 14px; }
.another { width: 155px; }
.continue { width: 179px; }
.save { width: 61px; background: #417690; }

.scrollbar { width: 15px; background: #f3f3f0; border-left: 1px solid #e8e8e6; display: flex; flex-direction: column; align-items: center; padding: 5px 0; }
.scrollbar svg { width: 10px; height: 6px; flex: none; }
.track { flex: 1; width: 100%; padding: 225px 1px 4px; }
.thumb { height: 709px; background: #b8b8b8; }

/* taskbar */
.taskbar { height: 48px; flex: none; display: flex; background: linear-gradient(#233530, #24364a 55%, #263c5a); }
.search { width: 48px; padding: 13px 0 0 10px; }
.app { width: 56px; height: 48px; margin-right: 8px; position: relative; }
.app svg { display: block; width: 56px; height: 48px; }
.app.open::before { content: ""; position: absolute; inset: 0 0 auto; height: 3px; background: #35c99b; }
.app.current { background: #52636f; }
.app.current i { position: absolute; right: 3px; top: 0; width: 3px; height: 3px; background: #24362f; }
.ij { font: 700 18px "Liberation Mono", monospace; }
.tray { margin-left: auto; display: flex; align-items: center; padding-right: 24px; color: #c7cdd2; }
.t-shield { margin-right: 25px; }
.t-note { margin-right: 27px; }
.t-sync { margin-right: 24px; }
.clock { width: 89px; font: 13.500px/18px "DejaVu Sans", "Noto Sans", sans-serif; font-family: "Noto Sans", sans-serif; letter-spacing: .1px; white-space: nowrap; padding-bottom: 3px; }
.day { font-size: 16px; margin-right: 1px; letter-spacing: 0; }
.rec { width: 12px; height: 12px; border-radius: 50%; background: #fb6a0a; margin-right: 12px; }
.t-wifi { margin-right: 9px; }
.t-vol { margin-right: 9px; }
.t-bat { margin-right: 4px; }
.pct { width: 34px; font: 700 11px "Noto Sans", sans-serif; letter-spacing: .6px; white-space: nowrap; }
```
